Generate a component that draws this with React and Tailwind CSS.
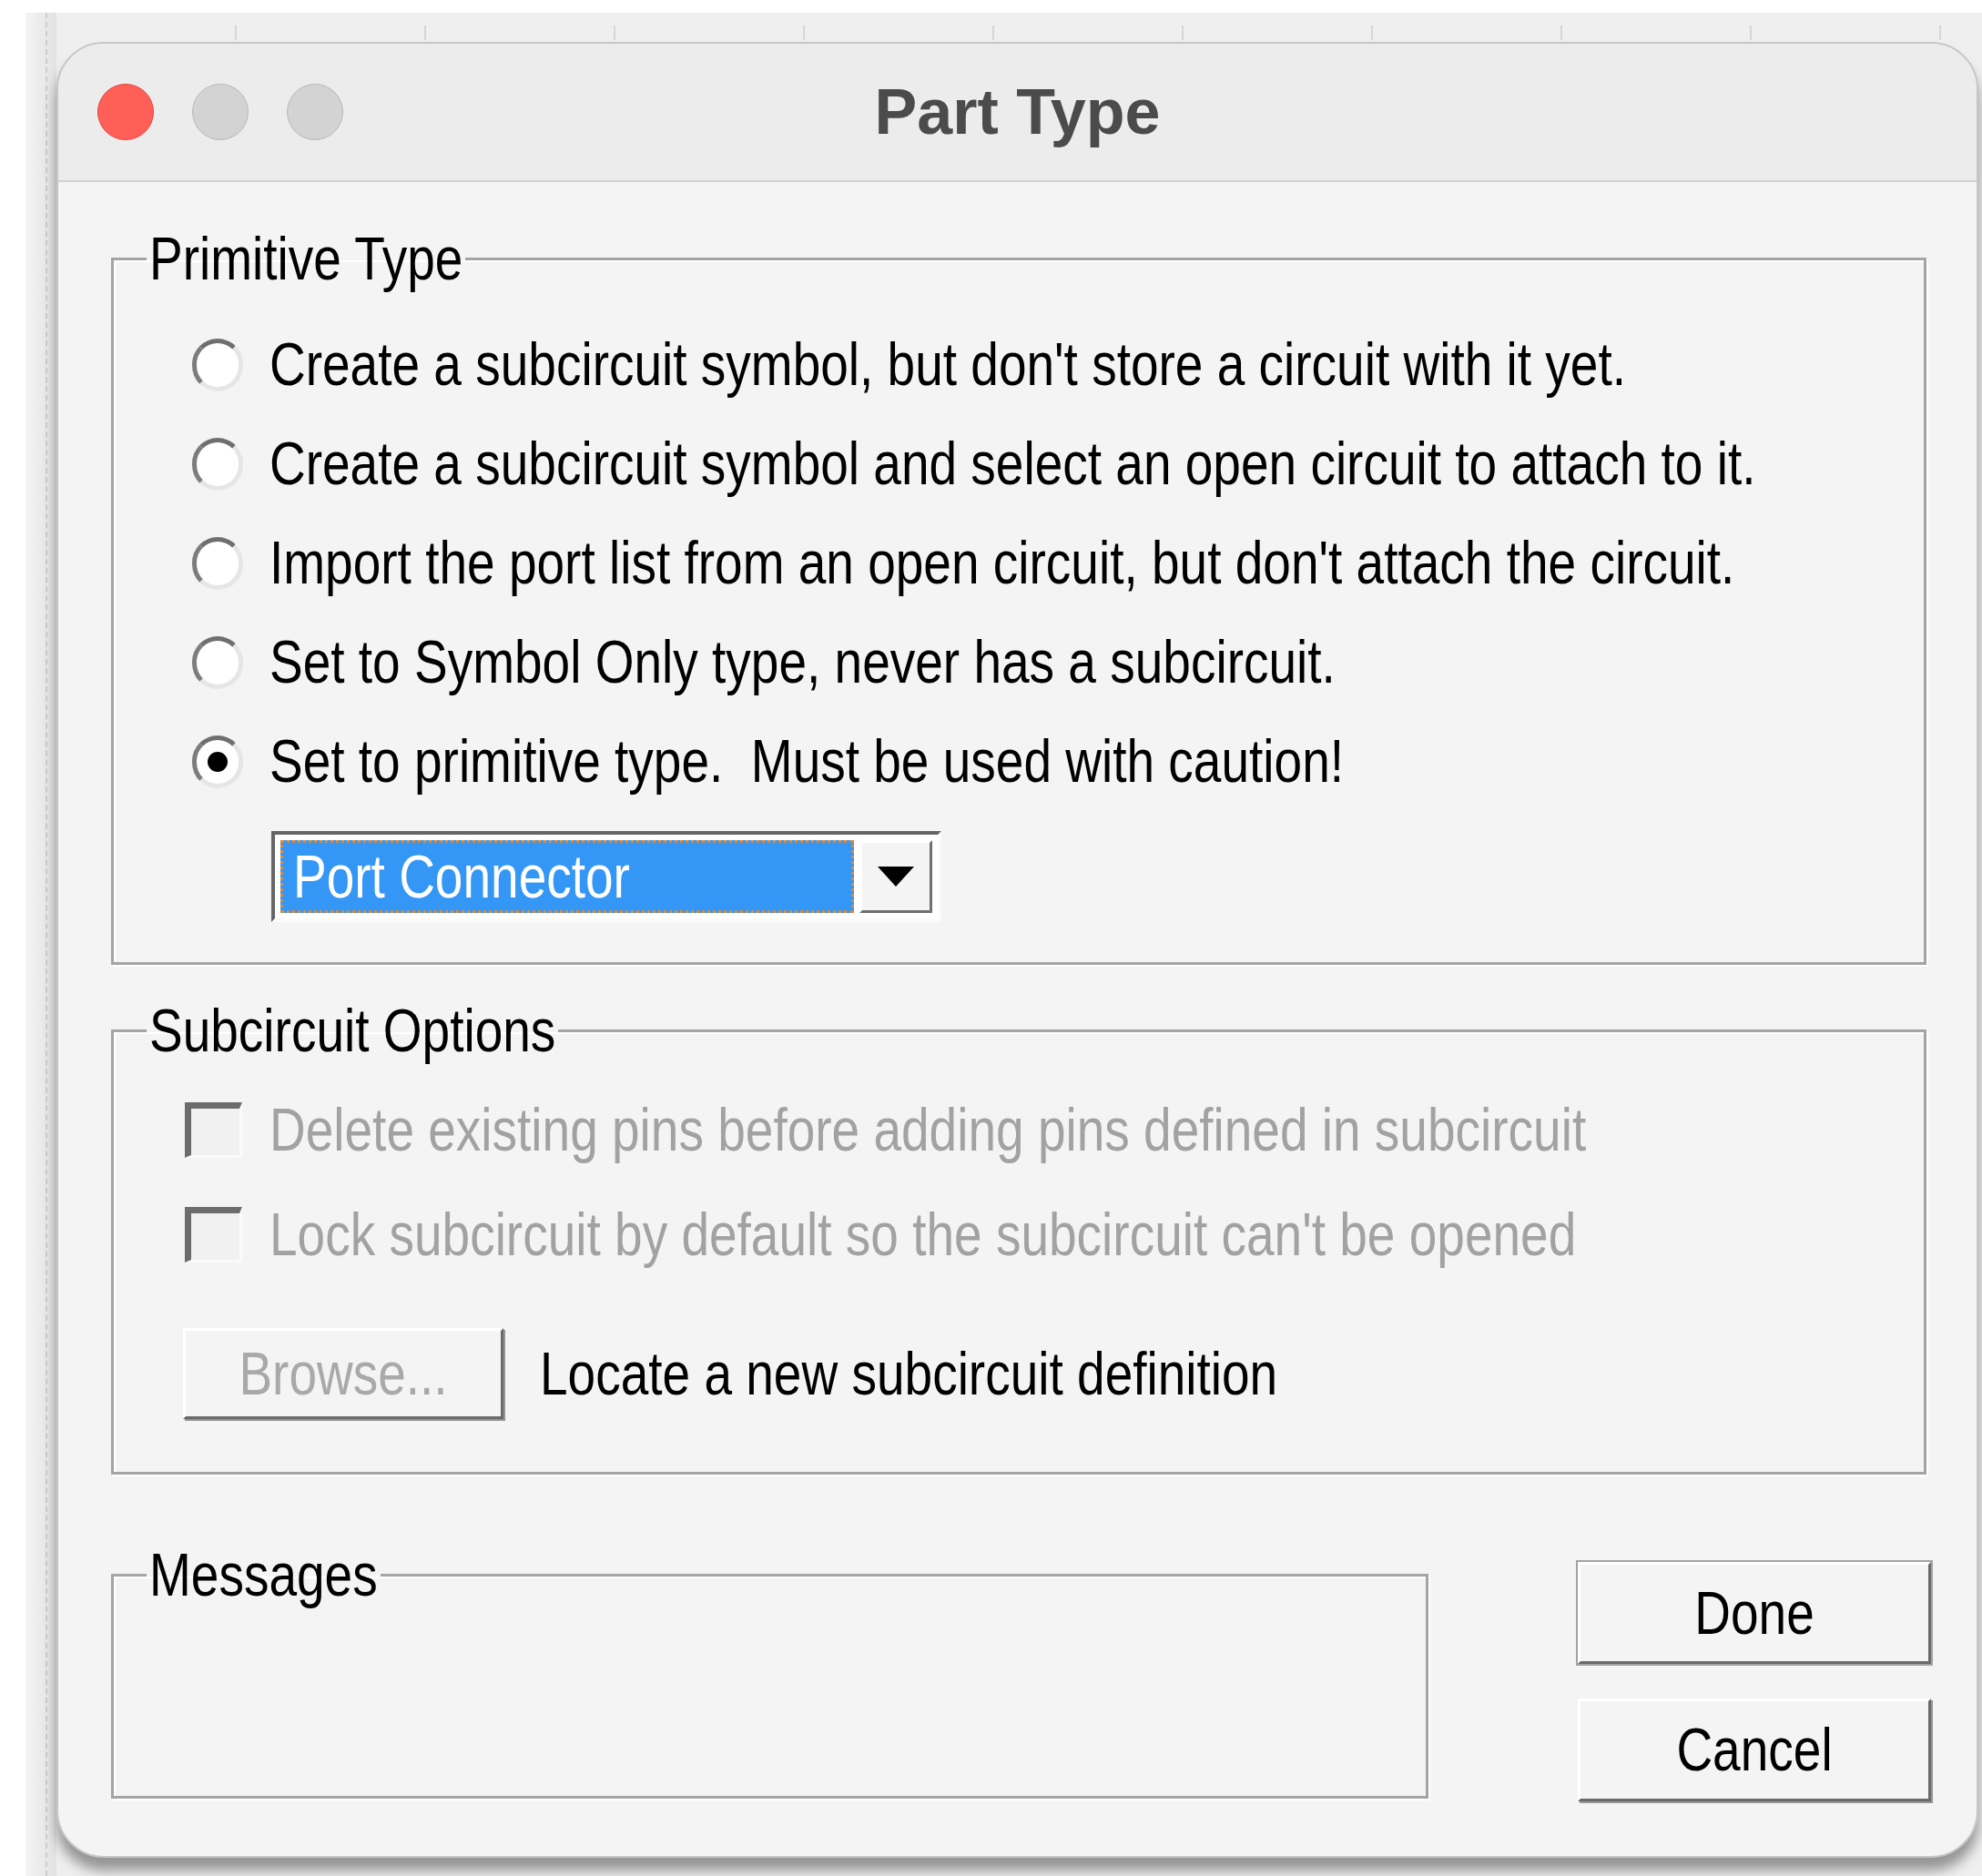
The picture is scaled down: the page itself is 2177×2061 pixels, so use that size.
const primitiveOptions = [
  "Create a subcircuit symbol, but don't store a circuit with it yet.",
  'Create a subcircuit symbol and select an open circuit to attach to it.',
  "Import the port list from an open circuit, but don't attach the circuit.",
  'Set to Symbol Only type, never has a subcircuit.',
  'Set to primitive type.  Must be used with caution!',
];

// Old Windows dialog text is tall and narrow, so stretch it a little
const Text = ({ children, className = '' }) => (
  <span className={`inline-block scale-y-[1.22] whitespace-pre ${className}`}>{children}</span>
);

const Radio = ({ checked }) => (
  <span className="flex h-[58px] w-[56px] shrink-0 items-center justify-center rounded-full border-[5px] border-t-[#6f6f6f] border-l-[#7d7d7d] border-r-[#e6e6e6] border-b-[#e6e6e6] bg-white">
    {checked && <span className="h-[22px] w-[22px] rounded-full bg-black" />}
  </span>
);

const Checkbox = () => (
  <span className="h-[61px] w-[63px] shrink-0 border-t-[7px] border-l-[7px] border-r-[3px] border-b-[3px] border-t-[#6c6c6c] border-l-[#6c6c6c] border-r-[#fbfbfb] border-b-[#fbfbfb] bg-[#f1f1f1]" />
);

const GroupBox = ({ title, className = '', children }) => (
  <fieldset className={`border-[3px] border-[#a4a4a4] shadow-[inset_2px_2px_0_#fff,2px_2px_0_#fff] ${className}`}>
    <legend className="ml-[36px] h-[55px] px-[3px] leading-[55px]">
      <Text>{title}</Text>
    </legend>
    {children}
  </fieldset>
);

const WinButton = ({ children, isDefault, disabled, className = '' }) => (
  <button
    className={`flex items-center justify-center border-[3px] border-t-white border-l-white border-r-[#6a6a6a] border-b-[#6a6a6a] bg-[#f4f4f4] shadow-[2px_2px_0_#959595] ${
      isDefault ? 'outline-2 outline-[#a3a3a3]' : ''
    } ${disabled ? 'text-[#a9a9a9]' : 'text-black'} ${className}`}
  >
    <Text>{children}</Text>
  </button>
);

const TitleBar = () => (
  <div className="grid h-[152px] shrink-0 grid-cols-[1fr_auto_1fr] items-center border-b-2 border-[#d2d2d2] bg-[#ececec] px-[43px]">
    <div className="flex items-center gap-[42px]">
      <span className="h-[62px] w-[62px] rounded-full border border-[#e5463d] bg-[#fe5f57]" />
      <span className="h-[62px] w-[62px] rounded-full border border-[#b8b8b8] bg-[#d3d3d3]" />
      <span className="h-[62px] w-[62px] rounded-full border border-[#b8b8b8] bg-[#d3d3d3]" />
    </div>
    <h1 className="text-[70px] font-bold leading-none text-[#4b4b4b]">Part Type</h1>
    <div />
  </div>
);

const PortDropdown = () => (
  <div className="ml-[87px] mt-[22px] flex h-[100px] w-[736px] gap-[6px] border-[4px] border-t-[#666] border-l-[#666] border-r-[#fbfbfb] border-b-[#fbfbfb] bg-white p-[6px]">
    <div className="flex flex-1 items-center border-[3px] border-dotted border-[#de8a34] bg-[#3597f5] pl-[11px] text-white">
      <Text>Port Connector</Text>
    </div>
    <div className="flex w-[80px] items-center justify-center border-[3px] border-t-white border-l-white border-r-[#707070] border-b-[#707070] bg-[#f4f4f4]">
      <svg width="40" height="22" viewBox="0 0 40 22">
        <polygon points="0,0 40,0 20,22" fill="#000" />
      </svg>
    </div>
  </div>
);

export default function App() {
  return (
    <div className="h-[2061px] w-[2177px] overflow-hidden bg-white pl-[28px] pt-[14px] font-['Liberation_Sans',Arial,sans-serif] text-[55px] leading-none text-black">
      <div className="flex h-full bg-[#efefef]">
        <div className="w-[34px] shrink-0 bg-linear-to-r from-[#f4f4f4] to-[#e2e2e2] pl-[22px]">
          <div className="h-full border-l-2 border-dashed border-[#cdcdcd]" />
        </div>
        <div className="flex flex-1 flex-col">
          <div className="h-[32px] shrink-0 pt-[14px]">
            <div className="h-[16px] bg-[repeating-linear-gradient(90deg,transparent_0_196px,#d6d6d6_196px_198px,transparent_198px_208px)]" />
          </div>

          <div className="flex h-[1995px] w-[2111px] flex-col overflow-hidden rounded-[52px] border-2 border-[#c6c6c6] bg-[#f4f4f4] shadow-[0_14px_14px_rgba(0,0,0,0.38)]">
            <TitleBar />

            <div className="flex flex-col pl-[58px] pr-[55px] pt-[57px]">
              <GroupBox title="Primitive Type" className="pb-[44px]">
                <div className="mt-[34px] flex flex-col pl-[86px]">
                  {primitiveOptions.map((label, i) => (
                    <div key={label} className="flex h-[109px] items-center gap-[29px]">
                      <Radio checked={i === 4} />
                      <Text>{label}</Text>
                    </div>
                  ))}
                  <PortDropdown />
                </div>
              </GroupBox>

              <GroupBox title="Subcircuit Options" className="mt-[45px] pb-[58px]">
                <div className="mt-[24px] flex flex-col pl-[78px]">
                  <div className="flex h-[115px] items-center gap-[30px] text-[#a2a2a2]">
                    <Checkbox />
                    <Text>Delete existing pins before adding pins defined in subcircuit</Text>
                  </div>
                  <div className="flex h-[115px] items-center gap-[30px] text-[#a2a2a2]">
                    <Checkbox />
                    <Text>Lock subcircuit by default so the subcircuit can't be opened</Text>
                  </div>
                  <div className="-ml-[2px] mt-[45px] flex items-center gap-[40px]">
                    <WinButton disabled className="h-[100px] w-[352px]">
                      Browse...
                    </WinButton>
                    <Text>Locate a new subcircuit definition</Text>
                  </div>
                </div>
              </GroupBox>

              <div className="-mr-[5px] mt-[83px] flex items-start justify-between">
                <GroupBox title="Messages" className="h-[273px] w-[1447px]" />
                <div className="mt-[13px] flex flex-col gap-[38px]">
                  <WinButton isDefault className="h-[112px] w-[388px]">
                    Done
                  </WinButton>
                  <WinButton className="h-[113px] w-[388px]">Cancel</WinButton>
                </div>
              </div>
            </div>
          </div>
        </div>
      </div>
    </div>
  );
}
